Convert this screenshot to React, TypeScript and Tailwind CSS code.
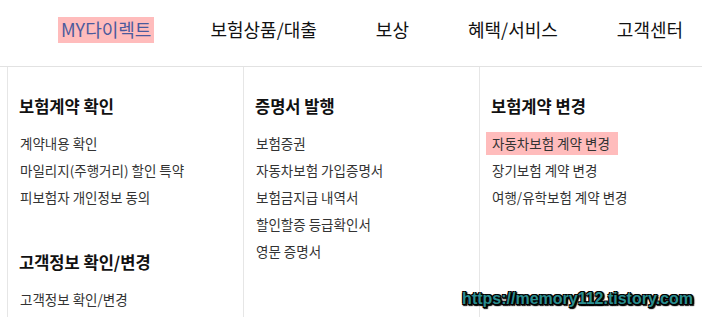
const navItems = ["MY다이렉트", "보험상품/대출", "보상", "혜택/서비스", "고객센터"];

type Group = { title: string; items: string[] };

const columns: Group[][] = [
  [
    { title: "보험계약 확인", items: ["계약내용 확인", "마일리지(주행거리) 할인 특약", "피보험자 개인정보 동의"] },
    { title: "고객정보 확인/변경", items: ["고객정보 확인/변경"] },
  ],
  [
    {
      title: "증명서 발행",
      items: ["보험증권", "자동차보험 가입증명서", "보험금지급 내역서", "할인할증 등급확인서", "영문 증명서"],
    },
  ],
  [
    {
      title: "보험계약 변경",
      items: ["자동차보험 계약 변경", "장기보험 계약 변경", "여행/유학보험 계약 변경"],
    },
  ],
];

const highlighted = "자동차보험 계약 변경";

export default function App() {
  return (
    <div className="relative w-[702px] h-[317px] overflow-hidden bg-white font-['Noto_Sans_CJK_KR',sans-serif]">
      <nav className="flex items-center h-[67px] pb-[7px] pl-[58px] gap-[59px] border-b border-[#e2e2e2]">
        {navItems.map((label, i) =>
          i === 0 ? (
            <span
              key={label}
              className="px-[3px] -mr-[3px] h-[26px] flex items-center bg-[#ffbcbc] text-[#4b5a9c] text-[18px]"
            >
              {label}
            </span>
          ) : (
            <span key={label} className="text-[18px] text-[#111]">
              {label}
            </span>
          )
        )}
      </nav>

      <div className="ml-[7px] grid grid-cols-[236px_236px_236px] h-[250px]">
        {columns.map((groups, ci) => (
          <div key={ci} className="border-l border-[#e6e6e6] pl-[11px] pt-[29px]">
            {groups.map((g, gi) => (
              <div key={g.title} className={gi > 0 ? "mt-[41px]" : ""}>
                <h3 className="h-[20px] flex items-center text-[16.5px] font-bold text-[#111] mb-[14px]">
                  {g.title}
                </h3>
                <ul>
                  {g.items.map((it) => (
                    <li key={it} className="h-[27px] flex items-center pl-px text-[13.5px] text-[#333]">
                      {it === highlighted ? (
                        <span className="-ml-[6px] pl-[6px] pr-[8px] h-[23px] flex items-center bg-[#ffbcbc]">{it}</span>
                      ) : (
                        it
                      )}
                    </li>
                  ))}
                </ul>
              </div>
            ))}
          </div>
        ))}
      </div>

      <div className="absolute right-[9px] bottom-[6px] font-['Liberation_Sans',sans-serif] font-bold text-[16px] text-[#2a8d8f] [text-shadow:1px_1px_0_#000,-1px_-1px_0_#000,1px_-1px_0_#000,-1px_1px_0_#000,0_2px_1px_#000,2px_0_1px_#000,2px_2px_1px_#000]">
        https://memory112.tistory.com
      </div>
    </div>
  );
}
